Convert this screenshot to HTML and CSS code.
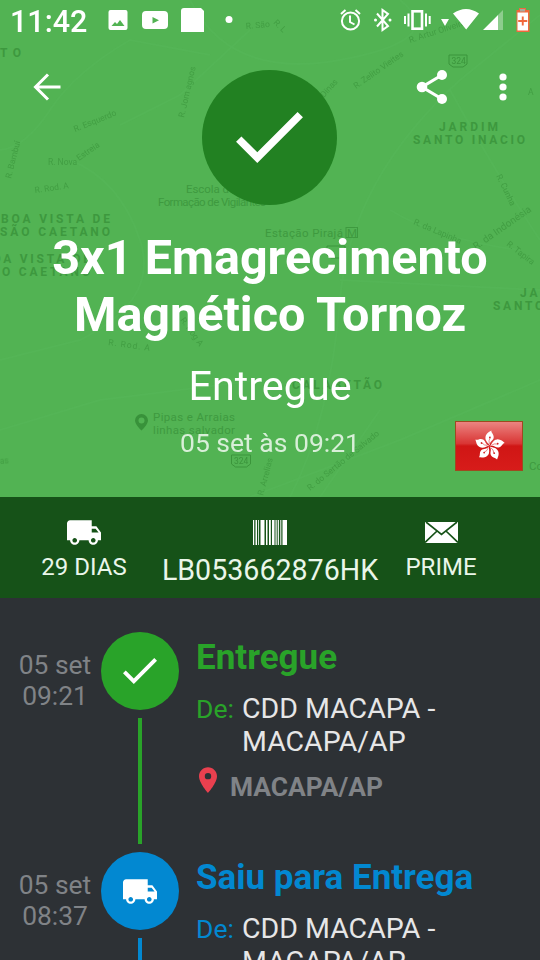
FILE: index.html
```html
<!DOCTYPE html>
<html lang="pt-BR">
<head>
<meta charset="utf-8">
<title>Rastreamento</title>
<link rel="stylesheet" href="styles.css">
</head>
<body>
<svg class="defs" aria-hidden="true">
  <symbol id="truck" viewBox="1 4 22 16"><path d="M20 8h-3V4H3c-1.100 0-2 .9-2 2v11h2c0 1.660 1.340 3 3 3s3-1.340 3-3h6c0 1.660 1.340 3 3 3s3-1.340 3-3h2v-5l-3-4zM6 18.500c-.83 0-1.500-.67-1.500-1.500s.67-1.500 1.500-1.500 1.500.67 1.500 1.500-.67 1.500-1.500 1.500zm13.500-9l1.960 2.500H17V9.500h2.500zm-1.500 9c-.83 0-1.500-.67-1.500-1.500s.67-1.500 1.500-1.500 1.500.67 1.500 1.500-.67 1.500-1.500 1.500z"/></symbol>
  <symbol id="check" viewBox="3.410 5.590 17.590 13.410"><path d="M9 16.170L4.830 12l-1.420 1.410L9 19 21 7l-1.410-1.410z"/></symbol>
</svg>
<div class="screen">
  <header class="hero">
    <svg class="map" viewBox="0 0 540 497" aria-hidden="true">
      <g class="roads">
        <path d="M0 150Q25 148 50 110T130 40L210 55M120 125L180 95 250 30M70 160Q120 180 140 240T80 340L0 360M190 0Q230 80 340 60T400 0M540 15L460 80Q350 180 340 300T290 497M340 280L540 290M450 90Q500 180 540 240M390 210Q440 240 520 250M0 430L100 400 260 380M250 497L400 440 540 380M380 410L320 497"/>
      </g>
      <g class="areas">
        <text x="0" y="57" textLength="21">TO</text>
        <text x="1" y="223" textLength="109">BOA VISTA DE</text>
        <text x="0" y="236" textLength="110">SÃO CAETANO</text>
        <text x="-18" y="263" textLength="108">BOA VISTA DE</text>
        <text x="-19" y="276" textLength="109">SÃO CAETANO</text>
        <text x="439" y="131" textLength="59">JARDIM</text>
        <text x="413" y="144" textLength="112">SANTO INACIO</text>
        <text x="520" y="297" textLength="59">JARDIM</text>
        <text x="493" y="310" textLength="112">SANTO INACIO</text>
        <text x="292" y="389" textLength="90">CALABETÃO</text>
      </g>
      <g class="places">
        <text x="186" y="193" textLength="49">Escola de</text>
        <text x="158" y="206" textLength="108">Formação de Vigilantes</text>
        <text x="265" y="237" textLength="78">Estação Pirajá</text>
        <text x="153" y="421" textLength="82">Pipas e Arraias</text>
        <text x="153" y="434" textLength="82">linhas salvador</text>
        <text x="529" y="470">Colina</text>
        <text x="347" y="237">M</text>
        <rect x="346" y="227.500" width="11.500" height="10"/>
      </g>
      <g class="streets">
        <text transform="translate(75 132) rotate(-22)">R. Esquerdo</text>
        <text transform="translate(48 165)">R. Nova</text>
        <text transform="translate(79 161) rotate(-35)">Estreia</text>
        <text transform="translate(35 193) rotate(-8)">R. Rod. A</text>
        <text transform="translate(108 345) rotate(8)" textLength="42">R. Rod. A</text>
        <text transform="translate(11 179) rotate(-76)">R. Bambuí</text>
        <text transform="translate(184 118) rotate(-77)">R. Jom agnos</text>
        <text transform="translate(246 29) rotate(-5)">R. São</text>
        <text transform="translate(273 23) rotate(45)">R. L</text>
        <text transform="translate(410 43) rotate(-18)">R. Artur Oliveira</text>
        <text transform="translate(356 89) rotate(-35)">R. Zelito Vieites</text>
        <text transform="translate(324 98) rotate(-48)">Dinas</text>
        <text transform="translate(496 176) rotate(64)">R. Cunha</text>
        <text class="avenue" transform="translate(476 250) rotate(-35)">R. da Indonésia</text>
        <text transform="translate(413 224) rotate(23)">R. da Lapinha</text>
        <text transform="translate(506 245) rotate(38)">R. Tapira</text>
        <text transform="translate(310 491) rotate(-39)">R. do Sertão de Salvado</text>
        <text transform="translate(263 496) rotate(-75)">R. Arrelias</text>
        <text transform="translate(180 320) rotate(54)">R. Nog A</text>
        <text transform="translate(0 464) rotate(-5)">as</text>
        <text transform="translate(528 95)">A</text>
      </g>
      <g class="shields">
        <path d="M449 55h18v9l-4 3h-10l-4-3zM231.500 455h19v9l-4 3h-11l-4-3zM327 246h18v9l-4 3h-10l-4-3z"/>
        <text x="451.500" y="64">324</text><text x="234" y="464">324</text>
      </g>
      <path class="poi" fill-rule="evenodd" d="M141.500 414a6.500 6.500 0 0 0-6.500 6.500c0 4 6.500 10 6.500 10s6.500-6 6.500-10a6.500 6.500 0 0 0-6.500-6.500zm0 3.500a3 3 0 1 1 0 6 3 3 0 0 1 0-6z"/>
    </svg>

    <div class="status">
      <span class="clock">11:42</span>
      <svg class="notices" viewBox="0 0 126 40">
        <path fill-rule="evenodd" d="M2.500 10h15q2 0 2 2v16q0 2-2 2h-15q-2 0-2-2v-16q0-2 2-2zM3.500 26h13l-4.500-6-3 4-2-2z"/>
        <path fill-rule="evenodd" d="M38 11h18q4 0 4 4v10q0 4-4 4H38q-4 0-4-4V15q0-4 4-4zM44.500 17v6.500l6.500-3.200z"/>
        <path d="M76 8h17l3 3v21H73V11q0-3 3-3z"/>
        <circle cx="121" cy="19.500" r="3.500"/>
      </svg>
      <svg class="system" viewBox="340 0 192 40">
        <g class="line"><circle cx="350.500" cy="21" r="8.600"/><path d="M350 15.500V22l4.500 2.500M341 14l4.500-4M355.500 10l4.500 4"/><path d="M377 13.500l11 12.500-5.500 4V10l5.500 4-11 12.500"/><rect class="phone" x="412.500" y="11.300" width="9.500" height="17.400"/><path d="M408.500 13.500v13M405 16v8M426 13.500v13M429.700 16v8"/></g>
        <circle cx="375.500" cy="20" r="1.500"/><circle cx="390" cy="20" r="1.500"/>
        <path d="M441 19h8l-4 7zM453 13.500Q466 4.500 479 13.500L466.200 29.500zM483 30l15-15v15z"/>
        <path class="dim" d="M498 15l5-5v20h-5z"/>
        <path class="battery-edge" d="M519 8h7v2h3.500v22h-13V10h2.500z"/>
        <path d="M517.500 12.500h10.500v18h-10.500z"/>
        <path class="battery-plus" d="M521.800 16.500h1.900v3.600h3.600V22h-3.600v3.500h-1.900V22h-3.600v-1.900h3.600z"/>
        <path class="battery-cap" d="M520 9h5v2.500h-5z"/>
      </svg>
    </div>

    <nav class="toolbar">
      <svg class="back" viewBox="0 0 28 28"><path d="M15 1.500L2.500 14 15 26.500M2.500 14H27.500"/></svg>
      <svg class="share" viewBox="0 0 32 36"><path d="M26 6L6 18l20 12"/><circle cx="26" cy="6" r="5"/><circle cx="6" cy="18" r="5.300"/><circle cx="26" cy="30" r="5"/></svg>
      <svg class="more" viewBox="0 0 8 28"><circle cx="4" cy="4" r="3.600"/><circle cx="4" cy="14" r="3.600"/><circle cx="4" cy="24" r="3.600"/></svg>
    </nav>

    <div class="badge"><svg preserveAspectRatio="none"><use href="#check"/></svg></div>
    <h1>3x1 Emagrecimento<br>Magnético Tornoz</h1>
    <p class="state">Entregue</p>
    <p class="when">05 set às 09:21</p>
    <svg class="flag" viewBox="0 0 68 50">
      <defs>
        <linearGradient id="gloss" x2="0" y2="1"><stop offset="0" stop-color="#ec8683"/><stop offset=".45" stop-color="#d93534"/><stop offset=".5" stop-color="#d01615"/><stop offset="1" stop-color="#d71c1a"/></linearGradient>
        <g id="petal"><path d="M.3-.5C-1-2.500-5.500-4-5.200-8.500-5-12-2-14-.3-15.500-.3-13 3.200-12 3-8.500 2.800-5.500-.8-4.500 .3-.5z"/><path class="vein" d="M-.3-2Q-2-5-.6-8"/><circle class="star" cx="-.8" cy="-8.500" r=".9"/></g>
      </defs>
      <rect class="field" x=".5" y=".5" width="67" height="49"/>
      <g class="flower" transform="translate(34.500 25) rotate(8)">
        <use href="#petal"/><use href="#petal" transform="rotate(72)"/><use href="#petal" transform="rotate(144)"/><use href="#petal" transform="rotate(216)"/><use href="#petal" transform="rotate(288)"/>
      </g>
    </svg>
  </header>

  <section class="stats">
    <div class="stat days"><svg class="s-truck"><use href="#truck"/></svg><span>29 DIAS</span></div>
    <div class="stat code">
      <svg class="s-bar" viewBox="0 0 34 25"><path d="M0 0h1.200v25H0zM2.500 0h1.500v25H2.500zM5 0h.8v25H5zM7.500 0h4v25h-4zM13 0h1.500v25H13zM16 0h1.800v25H16zM19 0h2.500v25H19zM22.500 0h1.200v25H22.500zM24.700 0h1.200v25H24.700zM27.300 0h1v25h-1zM29.500 0H34v25h-4.500z"/></svg>
      <span>LB053662876HK</span></div>
    <div class="stat kind">
      <svg class="s-mail" viewBox="0 0 33 21"><path class="paper" d="M0 0h33v21H0z"/><path class="fold" d="M1 0l15.500 12.500L32 0M0 20.500L12 9M33 20.500L21 9"/></svg>
      <span>PRIME</span></div>
  </section>

  <main class="timeline">
    <article class="event done">
      <time>05 set<br>09:21</time>
      <div class="rail"><div class="dot"><svg class="d-check"><use href="#check"/></svg></div><div class="stem"></div></div>
      <div class="info">
        <h2>Entregue</h2>
        <div class="from"><span class="label">De:</span><span class="place">CDD MACAPA -<br>MACAPA/AP</span></div>
        <div class="city"><svg viewBox="5 2 14 20"><path d="M12 2C8.130 2 5 5.130 5 9c0 5.250 7 13 7 13s7-7.750 7-13c0-3.870-3.130-7-7-7zm0 9.500a2.500 2.500 0 0 1 0-5 2.500 2.500 0 0 1 0 5z"/></svg><span>MACAPA/AP</span></div>
      </div>
    </article>
    <article class="event out">
      <time>05 set<br>08:37</time>
      <div class="rail"><div class="dot"><svg class="d-truck"><use href="#truck"/></svg></div><div class="stem"></div></div>
      <div class="info">
        <h2>Saiu para Entrega</h2>
        <div class="from"><span class="label">De:</span><span class="place">CDD MACAPA -<br>MACAPA/AP</span></div>
      </div>
    </article>
  </main>
</div>
</body>
</html>
```
FILE: styles.css
```css
* { box-sizing: border-box; margin: 0; }
body { font-family: Roboto, "Liberation Sans", sans-serif; color: #fff; background: #2d3135; }
svg { display: block; fill: #fff; flex: none; }
.defs { position: absolute; width: 0; height: 0; }
.screen { width: 540px; height: 960px; overflow: hidden; display: flex; flex-direction: column; }

.hero { position: relative; isolation: isolate; flex: none; height: 497px; background: #52b353; display: flex; flex-direction: column; align-items: center; text-align: center; overflow: hidden; }
.map { position: absolute; inset: 0; z-index: -1; width: 540px; height: 497px; }
.map text { fill: #287c29; }
.roads { fill: none; stroke: #5bba5c; stroke-width: 2; opacity: .3; }
.areas { font-size: 12px; font-weight: 700; opacity: .48; }
.places { font-size: 11.500px; opacity: .45; }
.places rect { fill: none; stroke: #287c29; }
.streets { font-size: 8.500px; opacity: .38; }
.streets .avenue { font-size: 10px; }
.shields { font-size: 8.500px; opacity: .55; }
.shields path { fill: none; stroke: #287c29; }
.poi { fill: #287c29; opacity: .6; }

.status { align-self: stretch; height: 40px; display: flex; align-items: center; padding: 0 8px 0 10px; }
.clock { width: 98px; font-size: 30.500px; font-weight: 500; text-align: left; line-height: 40px; padding-top: 3px; }
.notices { width: 126px; height: 40px; }
.system { width: 192px; height: 40px; margin-left: auto; }
.system .line { fill: none; stroke: #fff; stroke-width: 2; }
.system .phone { stroke-width: 2.600; }
.system .dim { fill: #8dcd8e; }
.battery-edge, .battery-plus { fill: #f1683c; }
.battery-cap { fill: #a9a9a0; }

.toolbar { align-self: stretch; height: 94px; display: flex; align-items: center; padding: 0 33px; }
.back { width: 28px; height: 28px; fill: none; stroke: #fff; stroke-width: 3; }
.share { width: 32px; height: 36px; margin-left: auto; stroke: none; }
.share path { fill: none; stroke: #fff; stroke-width: 3.200; }
.more { width: 8px; height: 28px; margin-left: 51px; }

.badge { flex: none; width: 135px; height: 135px; margin: -64px 1px 0 0; border-radius: 50%; background: #228122; display: flex; align-items: center; justify-content: center; }
.badge svg { width: 67px; height: 51px; }
h1 { margin-top: 24px; font-size: 48.500px; font-weight: 700; line-height: 57px; white-space: nowrap; }
.state { margin-top: 19px; font-size: 41.300px; line-height: 48px; }
.when { margin-top: 17px; font-size: 26.500px; line-height: 32px; color: #d8efd8; }
.flag { position: absolute; left: 455px; top: 421px; width: 68px; height: 50px; }
.field { fill: url(#gloss); stroke: #9e4a20; stroke-width: 1; }
.vein { fill: none; stroke: #d32222; stroke-width: .5; }
.star { fill: #d32222; }

.stats { flex: none; height: 101px; background: #165218; display: flex; }
.stat { display: flex; flex-direction: column; align-items: center; white-space: nowrap; color: #eaf6ea; }
.days { width: 168px; padding-top: 23px; font-size: 24px; }
.code { width: 204px; padding-top: 23px; font-size: 28.600px; }
.kind { width: 138px; padding-top: 25px; font-size: 24px; }
.s-truck { width: 34px; height: 25px; }
.s-bar { width: 34px; height: 25px; }
.s-mail { width: 33px; height: 21px; }
.fold { fill: none; stroke: #165218; stroke-width: 1.700; }
.days span { margin-top: 8px; line-height: 28px; }
.code span { margin-top: 8px; line-height: 34px; }
.kind span { margin-top: 10px; line-height: 28px; }

.timeline { flex: 1; padding-top: 34px; }
.event { height: 220px; display: flex; --tone: #29a329; }
.out { --tone: #0288d1; }
time { width: 101px; padding: 18px 0 0 9px; text-align: center; font-size: 26.400px; line-height: 31px; color: #808387; }
.rail { width: 78px; display: flex; flex-direction: column; align-items: center; }
.dot { flex: none; width: 78px; height: 78px; border-radius: 50%; background: var(--tone); display: flex; align-items: center; justify-content: center; }
.stem { width: 4px; flex: 1; margin: 8px 0; background: var(--tone); }
.d-check { width: 34px; height: 26px; }
.d-truck { width: 34px; height: 25px; }
.info { padding-left: 17px; white-space: nowrap; }
h2 { margin-top: 6px; font-size: 35px; line-height: 40px; font-weight: 700; color: var(--tone); }
.from { margin-top: 14px; display: flex; }
.label { width: 46px; font-size: 26.500px; line-height: 34px; color: var(--tone); }
.place { font-size: 28.500px; line-height: 33px; color: #e6e6e7; }
.city { margin-top: 9px; display: flex; font-size: 26.400px; font-weight: 700; line-height: 31px; color: #808387; }
.city svg { width: 18px; height: 26px; margin: 0 13px 0 3px; fill: #e9404f; }
.city span { padding-top: 5px; }
```
